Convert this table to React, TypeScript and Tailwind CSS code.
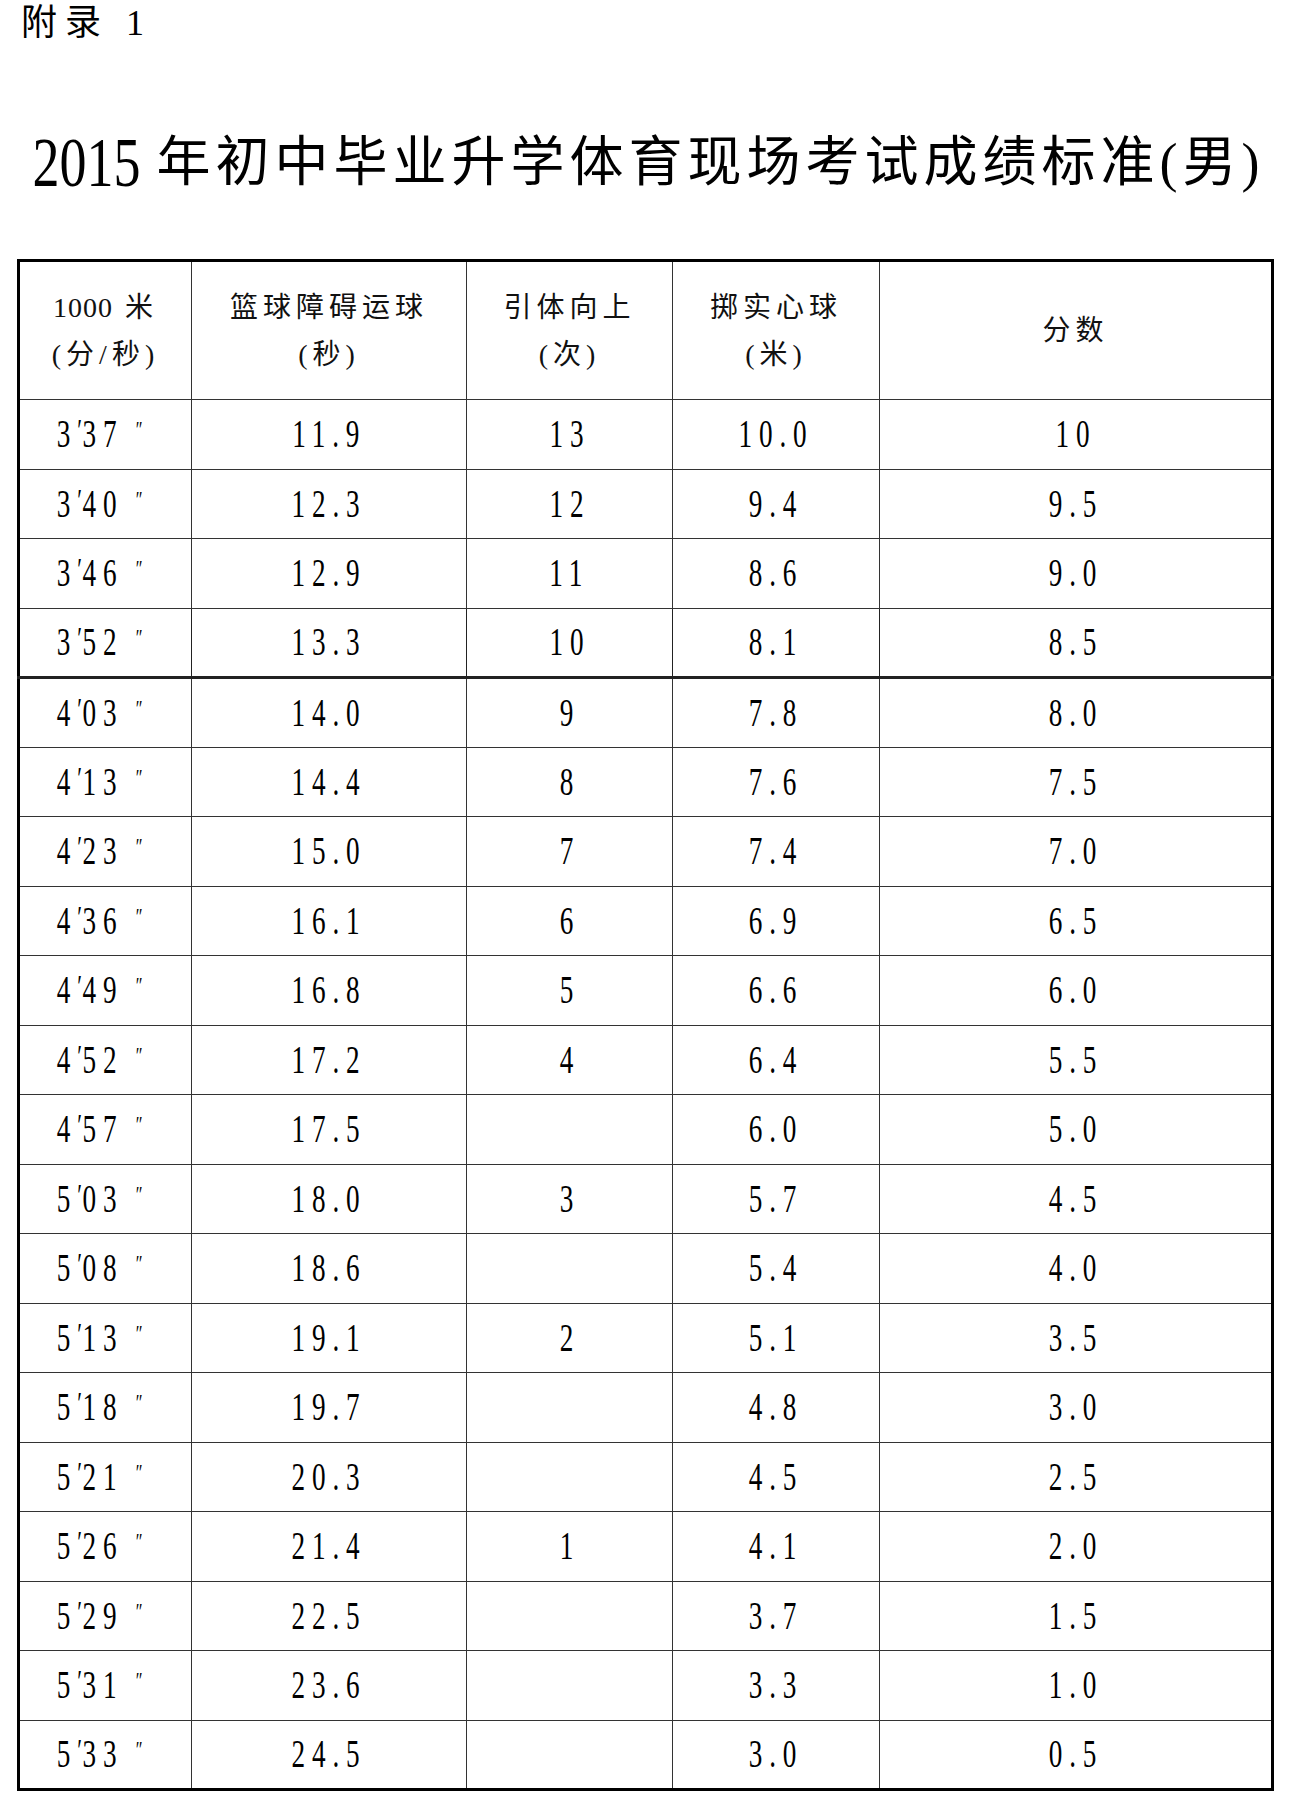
import React from "react";

const rows: [string, string, string, string, string, string][] = [
  ["3", "37", "11.9", "13", "10.0", "10"],
  ["3", "40", "12.3", "12", "9.4", "9.5"],
  ["3", "46", "12.9", "11", "8.6", "9.0"],
  ["3", "52", "13.3", "10", "8.1", "8.5"],
  ["4", "03", "14.0", "9", "7.8", "8.0"],
  ["4", "13", "14.4", "8", "7.6", "7.5"],
  ["4", "23", "15.0", "7", "7.4", "7.0"],
  ["4", "36", "16.1", "6", "6.9", "6.5"],
  ["4", "49", "16.8", "5", "6.6", "6.0"],
  ["4", "52", "17.2", "4", "6.4", "5.5"],
  ["4", "57", "17.5", "", "6.0", "5.0"],
  ["5", "03", "18.0", "3", "5.7", "4.5"],
  ["5", "08", "18.6", "", "5.4", "4.0"],
  ["5", "13", "19.1", "2", "5.1", "3.5"],
  ["5", "18", "19.7", "", "4.8", "3.0"],
  ["5", "21", "20.3", "", "4.5", "2.5"],
  ["5", "26", "21.4", "1", "4.1", "2.0"],
  ["5", "29", "22.5", "", "3.7", "1.5"],
  ["5", "31", "23.6", "", "3.3", "1.0"],
  ["5", "33", "24.5", "", "3.0", "0.5"],
];

const font = "font-['Liberation_Serif','Noto_Sans_CJK_SC',serif]";

// tall narrow digits like the printed page
const Num = ({ children }: { children: React.ReactNode }) => (
  <span className="inline-block scale-x-[0.68] text-[40px] leading-none tracking-[10px] whitespace-pre">
    {children}
  </span>
);

const Head = ({ top, bottom }: { top: React.ReactNode; bottom?: string }) => (
  <div className="flex flex-col items-center gap-[12px] text-[28px] leading-[35px] tracking-[5px] text-[#111]">
    <span>{top}</span>
    {bottom && <span>{bottom}</span>}
  </div>
);

export default function App() {
  return (
    <div className={`w-[1297px] h-[1817px] bg-white text-black ${font}`}>
      <div className="h-[46px] pl-[21px] text-[36px] leading-[46px] tracking-[8px]">附录 1</div>

      <div className="pt-[21px] h-[213px]">
        <h1 className="h-[192px] flex items-center justify-center text-[54px] font-normal tracking-[5px]">
          <span className="inline-block scale-y-[1.3] tracking-normal">2015</span>
          <span className="ml-[16px]">年初中毕业升学体育现场考试成绩标准(男)</span>
        </h1>
      </div>

      <div className="pl-[17px]">
        <table className="w-[1254px] table-fixed border-collapse border-[3px] border-black">
          <colgroup>
            <col className="w-[173px]" />
            <col className="w-[275px]" />
            <col className="w-[206px]" />
            <col className="w-[207px]" />
            <col className="w-[393px]" />
          </colgroup>
          <thead>
            <tr className="h-[139px]">
              <th className="border-[1.5px] border-[#333] font-normal">
                <Head top={<><span className="tracking-[1px]">1000</span> 米</>} bottom="(分/秒)" />
              </th>
              <th className="border-[1.5px] border-[#333] font-normal"><Head top="篮球障碍运球" bottom="(秒)" /></th>
              <th className="border-[1.5px] border-[#333] font-normal"><Head top="引体向上" bottom="(次)" /></th>
              <th className="border-[1.5px] border-[#333] font-normal"><Head top="掷实心球" bottom="(米)" /></th>
              <th className="border-[1.5px] border-[#333] font-normal"><Head top="分数" /></th>
            </tr>
          </thead>
          <tbody>
            {rows.map((r, i) => {
              const cell =
                i === 3
                  ? "border-x-[1.5px] border-t-[1.5px] border-b-[3px] border-[#222] text-center align-middle"
                  : "border-[1.5px] border-[#333] text-center align-middle";
              return (
                <tr key={i} className="h-[69.5px]">
                  <td className={cell}>
                    <span className="inline-block pr-[6px]">
                      <Num>
                        {r[0]}
                        <span className="relative -top-[6px] text-[32px] tracking-[1px]">′</span>
                        {r[1]}
                        <span className="relative -top-[10px] ml-[18px] text-[24px]">″</span>
                      </Num>
                    </span>
                  </td>
                  <td className={cell}><Num>{r[2]}</Num></td>
                  <td className={cell}><Num>{r[3]}</Num></td>
                  <td className={cell}><Num>{r[4]}</Num></td>
                  <td className={cell}><Num>{r[5]}</Num></td>
                </tr>
              );
            })}
          </tbody>
        </table>
      </div>
    </div>
  );
}
